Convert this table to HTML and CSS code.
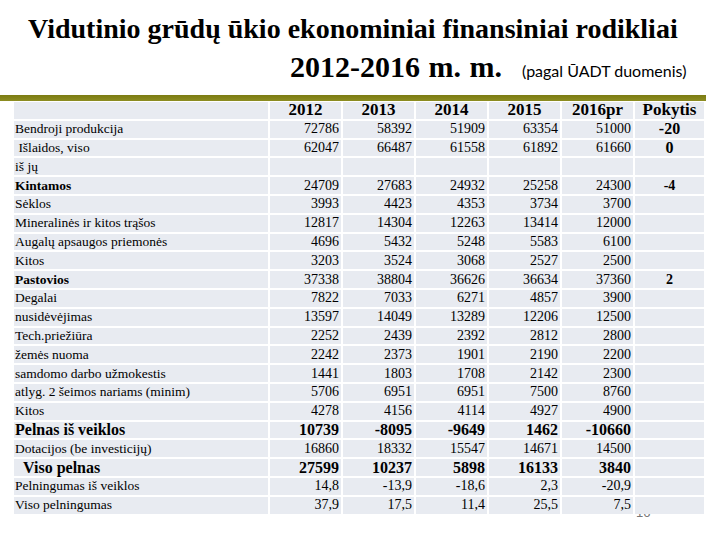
FILE: index.html
```html
<!DOCTYPE html>
<html>
<head>
    <meta charset="utf-8">
    <link rel="stylesheet" href="styles.css">
</head>
<body>
    <div class="slide">
        <div class="title">
            <div class="title-line">Vidutinio grūdų ūkio ekonominiai finansiniai rodikliai</div>
            <div class="title-line second">
                <span class="years">2012-2016 m. m.</span>
                <span class="source">(pagal ŪADT duomenis)</span>
            </div>
        </div>
        <div class="rule"></div>
        <div class="page-no">16</div>
        <table class="data">
            <tr class="head">
                <td class="label"></td>
                <td>2012</td><td>2013</td><td>2014</td><td>2015</td><td>2016pr</td><td>Pokytis</td>
            </tr>
            <tr>
                <td class="label">Bendroji produkcija</td>
                <td>72786</td><td>58392</td><td>51909</td><td>63354</td><td>51000</td><td class="change big">-20</td>
            </tr>
            <tr>
                <td class="label">&nbsp;Išlaidos, viso</td>
                <td>62047</td><td>66487</td><td>61558</td><td>61892</td><td>61660</td><td class="change big">0</td>
            </tr>
            <tr>
                <td class="label">iš jų</td>
                <td></td><td></td><td></td><td></td><td></td><td class="change"></td>
            </tr>
            <tr>
                <td class="label strong">Kintamos</td>
                <td>24709</td><td>27683</td><td>24932</td><td>25258</td><td>24300</td><td class="change">-4</td>
            </tr>
            <tr>
                <td class="label">Sėklos</td>
                <td>3993</td><td>4423</td><td>4353</td><td>3734</td><td>3700</td><td class="change"></td>
            </tr>
            <tr>
                <td class="label">Mineralinės ir kitos trąšos</td>
                <td>12817</td><td>14304</td><td>12263</td><td>13414</td><td>12000</td><td class="change"></td>
            </tr>
            <tr>
                <td class="label">Augalų apsaugos priemonės</td>
                <td>4696</td><td>5432</td><td>5248</td><td>5583</td><td>6100</td><td class="change"></td>
            </tr>
            <tr>
                <td class="label">Kitos</td>
                <td>3203</td><td>3524</td><td>3068</td><td>2527</td><td>2500</td><td class="change"></td>
            </tr>
            <tr>
                <td class="label strong">Pastovios</td>
                <td>37338</td><td>38804</td><td>36626</td><td>36634</td><td>37360</td><td class="change">2</td>
            </tr>
            <tr>
                <td class="label">Degalai</td>
                <td>7822</td><td>7033</td><td>6271</td><td>4857</td><td>3900</td><td class="change"></td>
            </tr>
            <tr>
                <td class="label">nusidėvėjimas</td>
                <td>13597</td><td>14049</td><td>13289</td><td>12206</td><td>12500</td><td class="change"></td>
            </tr>
            <tr>
                <td class="label">Tech.priežiūra</td>
                <td>2252</td><td>2439</td><td>2392</td><td>2812</td><td>2800</td><td class="change"></td>
            </tr>
            <tr>
                <td class="label">žemės nuoma</td>
                <td>2242</td><td>2373</td><td>1901</td><td>2190</td><td>2200</td><td class="change"></td>
            </tr>
            <tr>
                <td class="label">samdomo darbo užmokestis</td>
                <td>1441</td><td>1803</td><td>1708</td><td>2142</td><td>2300</td><td class="change"></td>
            </tr>
            <tr>
                <td class="label">atlyg. 2 šeimos nariams (minim)</td>
                <td>5706</td><td>6951</td><td>6951</td><td>7500</td><td>8760</td><td class="change"></td>
            </tr>
            <tr>
                <td class="label">Kitos</td>
                <td>4278</td><td>4156</td><td>4114</td><td>4927</td><td>4900</td><td class="change"></td>
            </tr>
            <tr class="total">
                <td class="label">Pelnas iš veiklos</td>
                <td>10739</td><td>-8095</td><td>-9649</td><td>1462</td><td>-10660</td><td class="change"></td>
            </tr>
            <tr>
                <td class="label">Dotacijos (be investicijų)</td>
                <td>16860</td><td>18332</td><td>15547</td><td>14671</td><td>14500</td><td class="change"></td>
            </tr>
            <tr class="total">
                <td class="label">&nbsp;&nbsp;Viso pelnas</td>
                <td>27599</td><td>10237</td><td>5898</td><td>16133</td><td>3840</td><td class="change"></td>
            </tr>
            <tr>
                <td class="label">Pelningumas iš veiklos</td>
                <td>14,8</td><td>-13,9</td><td>-18,6</td><td>2,3</td><td>-20,9</td><td class="change"></td>
            </tr>
            <tr>
                <td class="label">Viso pelningumas</td>
                <td>37,9</td><td>17,5</td><td>11,4</td><td>25,5</td><td>7,5</td><td class="change"></td>
            </tr>
        </table>
    </div>
</body>
</html>
```

FILE: styles.css
```css
body {
    margin: 0;
    background: #fff;
    font-family: "Liberation Serif", "Times New Roman", serif;
    color: #000;
}

.slide {
    position: relative;
    width: 720px;
    height: 540px;
    overflow: hidden;
}

.title {
    padding-top: 10px;
    font-weight: bold;
}

.title-line {
    font-size: 28px;
    line-height: 38px;
    padding-left: 28px;
    white-space: nowrap;
}

.title-line.second {
    padding-left: 290px;
    line-height: 38px;
    display: flex;
    align-items: baseline;
}

.years {
    font-size: 30px;
    word-spacing: 1px;
}

.source {
    font-family: Lato, "Open Sans", sans-serif;
    font-weight: normal;
    font-size: 16px;
    margin-left: 20px;
}

.rule {
    margin-top: 5px;
    width: 706px;
    height: 6px;
    background: linear-gradient(#7b7b12, #8d8d22);
}

.page-no {
    position: absolute;
    left: 636px;
    top: 505px;
    font-family: "Liberation Sans", Arial, sans-serif;
    font-size: 13px;
    color: #777;
}

.data {
    position: relative;
    z-index: 1;
    margin-left: 12px;
    border-collapse: separate;
    border-spacing: 2px 2px;
    margin-top: -1px;
}

.data td {
    background: #e8ebf1;
    height: 16.8px;
    padding: 0 2px 0 0;
    width: 69px;
    font-size: 14px;
    line-height: 16px;
    text-align: right;
    white-space: nowrap;
}

.data td.label {
    width: 253px;
    padding: 0 0 0 1px;
    text-align: left;
    font-size: 13.5px;
}

.data td.strong {
    font-weight: bold;
}

.data .head td {
    font-weight: bold;
    font-size: 17px;
    text-align: center;
    padding: 0;
}

.data td.change {
    text-align: center;
    font-weight: bold;
    font-size: 14px;
    padding: 0;
}

.data td.change.big {
    font-size: 16px;
}

.data .total td {
    font-weight: bold;
    font-size: 16px;
}

.data .total td.label {
    font-size: 16px;
}
```
